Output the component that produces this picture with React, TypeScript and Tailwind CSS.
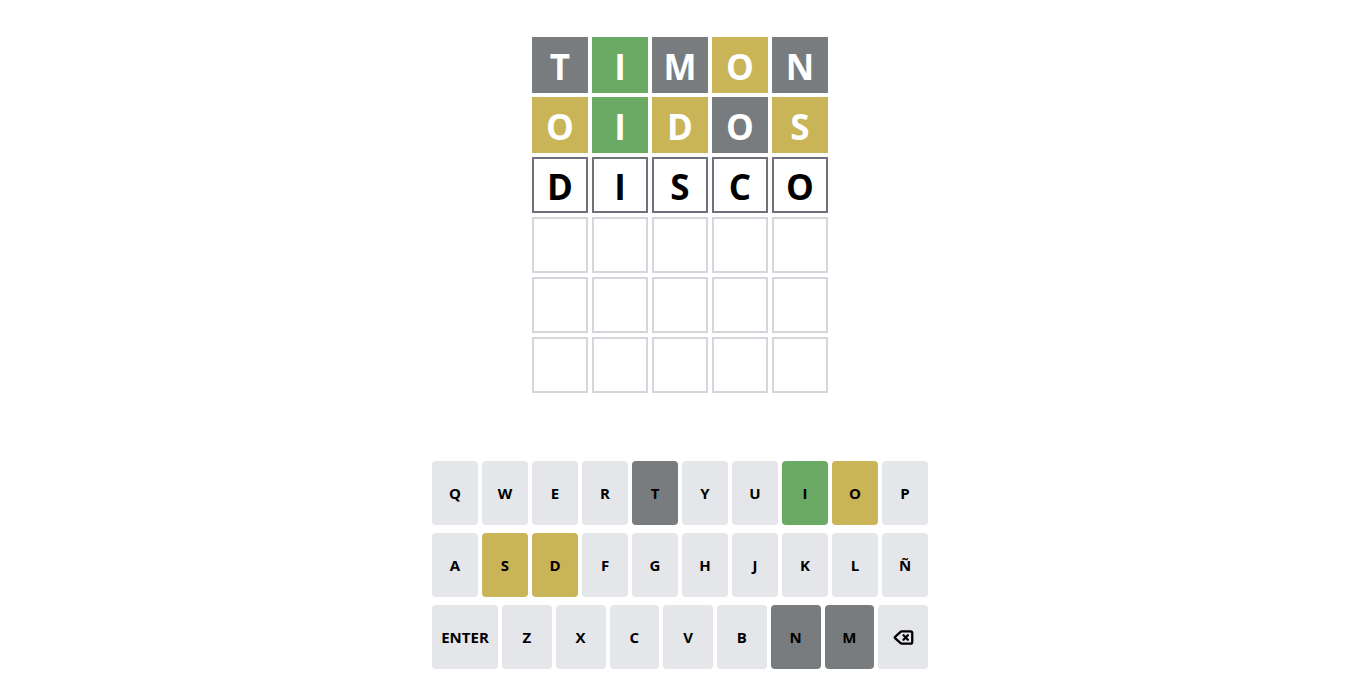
import React from "react";

type S = "g" | "y" | "x" | "t" | "e";

const rows: { l: string; s: S }[][] = [
  [
    { l: "T", s: "x" },
    { l: "I", s: "g" },
    { l: "M", s: "x" },
    { l: "O", s: "y" },
    { l: "N", s: "x" },
  ],
  [
    { l: "O", s: "y" },
    { l: "I", s: "g" },
    { l: "D", s: "y" },
    { l: "O", s: "x" },
    { l: "S", s: "y" },
  ],
  [
    { l: "D", s: "t" },
    { l: "I", s: "t" },
    { l: "S", s: "t" },
    { l: "C", s: "t" },
    { l: "O", s: "t" },
  ],
];

const tileCls: Record<S, string> = {
  g: "bg-[#6aaa64] text-white",
  y: "bg-[#c9b458] text-white",
  x: "bg-[#787c7e] text-white",
  t: "bg-white border-2 border-[#6e7177] text-black",
  e: "bg-white border-2 border-[#d3d6da]",
};

const keyState: Record<string, string> = {
  T: "x",
  I: "g",
  O: "y",
  S: "y",
  D: "y",
  N: "x",
  M: "x",
};

function keyCls(k: string) {
  const s = keyState[k];
  if (s === "g") return "bg-[#6aaa64]";
  if (s === "y") return "bg-[#c9b458]";
  if (s === "x") return "bg-[#787c7e]";
  return "bg-[#e4e6e9]";
}

function Key({ k, wide }: { k: string; wide?: boolean }) {
  return (
    <div
      className={
        "h-[64px] rounded flex items-center justify-center text-[15px] font-bold text-black " +
        (wide ? "w-[66px] shrink-0 " : "flex-1 ") +
        keyCls(k)
      }
    >
      {k}
    </div>
  );
}

export default function App() {
  const grid = [...rows];
  while (grid.length < 6) grid.push(Array.from({ length: 5 }, () => ({ l: "", s: "e" as S })));
  return (
    <div
      className="min-h-[683px] bg-white flex flex-col items-center pt-[37px]"
      style={{ fontFamily: '"Open Sans", "Noto Sans", sans-serif' }}
    >
      <div className="flex flex-col gap-[4px]">
        {grid.map((r, i) => (
          <div key={i} className="flex gap-[4px]">
            {r.map((c, j) => (
              <div
                key={j}
                className={
                  "w-[56px] h-[56px] flex items-center justify-center text-[35px] font-bold leading-none pt-[3px] " +
                  tileCls[c.s]
                }
              >
                {c.l}
              </div>
            ))}
          </div>
        ))}
      </div>
      <div className="mt-[68px] w-[496px] flex flex-col gap-[8px]">
        <div className="flex gap-[4px]">
          {"QWERTYUIOP".split("").map((k) => (
            <Key key={k} k={k} />
          ))}
        </div>
        <div className="flex gap-[4px]">
          {"ASDFGHJKLÑ".split("").map((k) => (
            <Key key={k} k={k} />
          ))}
        </div>
        <div className="flex gap-[4px]">
          <Key k="ENTER" wide />
          {"ZXCVBNM".split("").map((k) => (
            <Key key={k} k={k} />
          ))}
          <div className="flex-1 h-[64px] rounded flex items-center justify-center bg-[#e4e6e9]">
            <svg width="21" height="21" viewBox="0 0 24 24" fill="none" stroke="black" strokeWidth="2.6" strokeLinecap="round" strokeLinejoin="round">
              <path d="M10 5a2 2 0 0 0-1.344.519l-6.328 5.74a1 1 0 0 0 0 1.481l6.328 5.741A2 2 0 0 0 10 19h10a2 2 0 0 0 2-2V7a2 2 0 0 0-2-2z" />
              <path d="m12 9.5 5 5" />
              <path d="m17 9.5-5 5" />
            </svg>
          </div>
        </div>
      </div>
    </div>
  );
}
